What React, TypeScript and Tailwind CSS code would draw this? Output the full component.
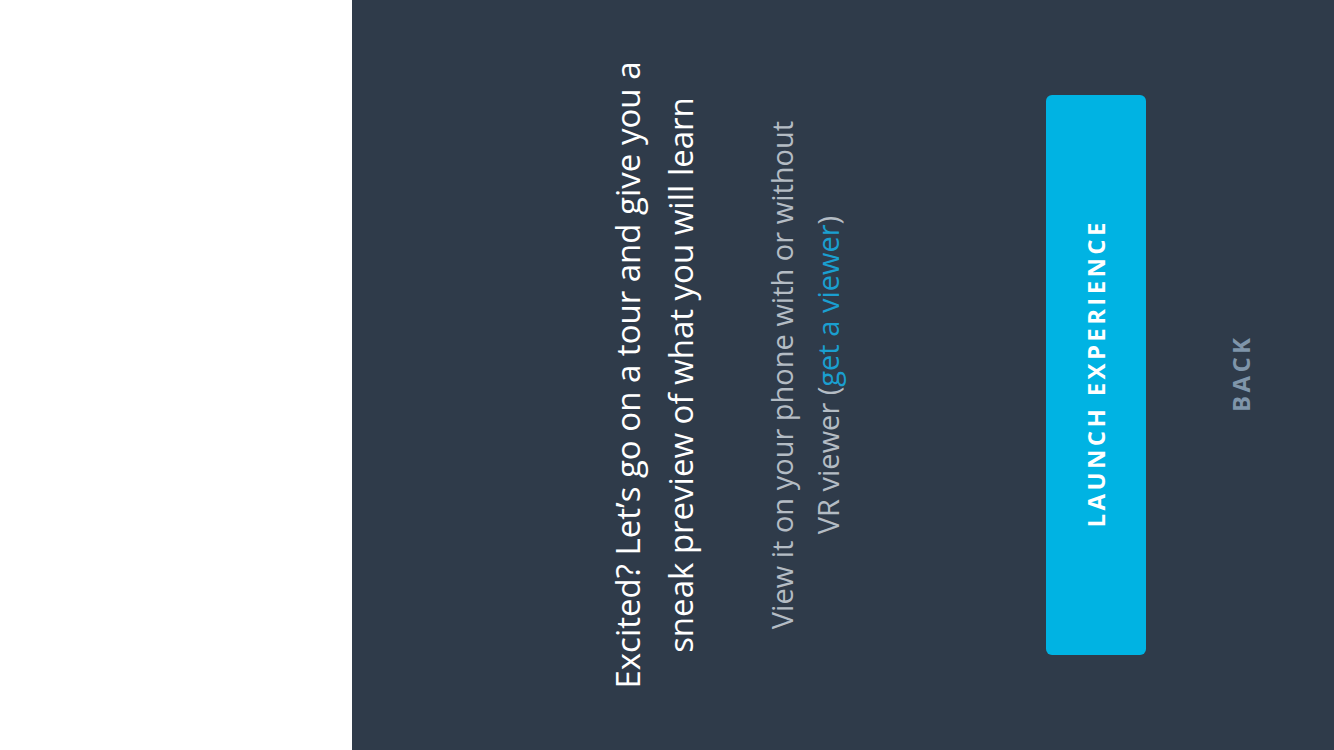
import React from 'react';

function App() {
    return (
        <div className="flex h-[750px] w-[1334px] overflow-hidden bg-white font-['Open_Sans',sans-serif]">
            <div className="h-full w-[352px] shrink-0 bg-white"></div>

            <div className="flex h-full flex-1 items-center justify-center overflow-hidden bg-[#2f3b4a]">
                {/* content is turned to read bottom-up */}
                <div className="flex h-[982px] w-[750px] shrink-0 -rotate-90 flex-col items-center pt-[250px]">
                    <h1 className="text-center text-[33px] leading-[1.6] font-normal text-white">
                        Excited? Let’s go on a tour and give you a<br />
                        sneak preview of what you will learn
                    </h1>

                    <p className="mt-[51px] text-center text-[29px] leading-[1.6] text-[#b4bcc4]">
                        View it on your phone with or without<br />
                        VR viewer (<a href="#" className="text-[#1a9fd0]">get a viewer</a>)
                    </p>

                    <button className="mt-[195px] flex h-[100px] w-[560px] items-center justify-center rounded-[6px] bg-[#00b3e3] pl-[0.14em] text-[24px] font-bold tracking-[0.14em] text-white">
                        LAUNCH EXPERIENCE
                    </button>

                    <button className="mt-[83px] pl-[0.14em] text-[24px] leading-[24px] font-bold tracking-[0.14em] text-[#7f95aa]">
                        BACK
                    </button>
                </div>
            </div>
        </div>
    );
}

export default App;
